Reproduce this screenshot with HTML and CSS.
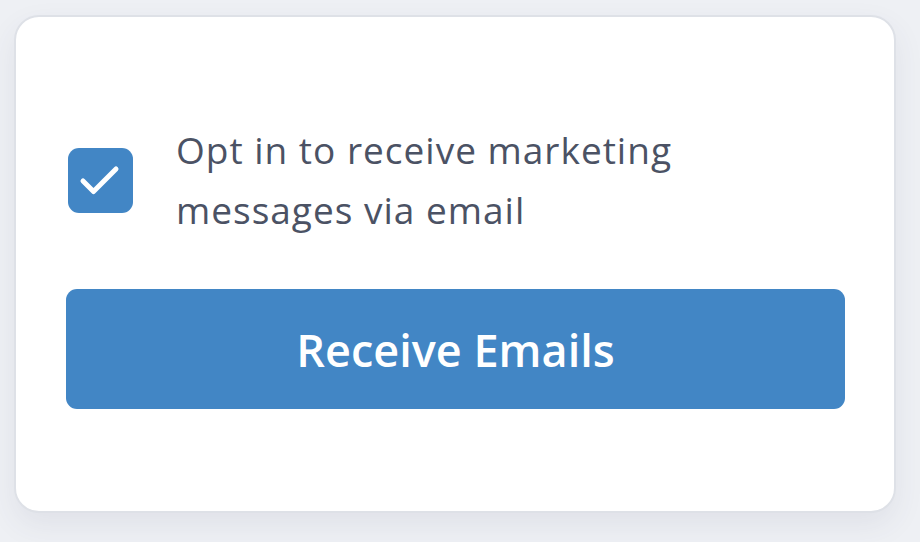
FILE: index.html
```html
<!DOCTYPE html>
<html>

<head>
    <title>Receive Emails</title>
    <meta charset="UTF-8">
    <link rel="stylesheet" href="styles.css">
</head>

<body>
    <div class="card">
        <label class="opt-in">
            <span class="checkbox">
                <svg viewBox="0 0 65 65" width="65" height="65">
                    <path d="M15 33 L25.5 43.5 L48 21" fill="none" stroke="#fff" stroke-width="5" stroke-linecap="round" stroke-linejoin="round"/>
                </svg>
            </span>
            <span class="opt-text">Opt in to receive marketing messages via email</span>
        </label>
        <button class="submit">Receive Emails</button>
    </div>
</body>

</html>
```

FILE: styles.css
```css
* {
    margin: 0;
    padding: 0;
    box-sizing: border-box;
}

body {
    font-family: "Open Sans", "Liberation Sans", Arial, sans-serif;
    background: #eef0f4;
    width: 920px;
    height: 542px;
    padding: 15px 24px 0 14px;
}

.card {
    background: #fff;
    border: 2px solid #dee1e7;
    border-radius: 25px;
    box-shadow: 0 12px 30px rgba(60, 70, 100, 0.08);
    padding: 103px 49px 102px 50px;
    height: 498px;
}

.opt-in {
    display: flex;
    align-items: center;
    gap: 43px;
    padding-left: 2px;
    margin-bottom: 49px;
}

.checkbox {
    width: 65px;
    height: 65px;
    flex-shrink: 0;
    background: #4286c5;
    border-radius: 11px;
    display: block;
}

.checkbox svg {
    display: block;
}

.opt-text {
    font-size: 37px;
    line-height: 60px;
    letter-spacing: 1px;
    color: #4b5264;
    max-width: 560px;
}

.submit {
    display: block;
    width: 100%;
    height: 120px;
    background: #4286c5;
    color: #fff;
    border: none;
    border-radius: 11px;
    font-family: inherit;
    font-size: 45px;
    font-weight: 600;
    cursor: pointer;
}
```
